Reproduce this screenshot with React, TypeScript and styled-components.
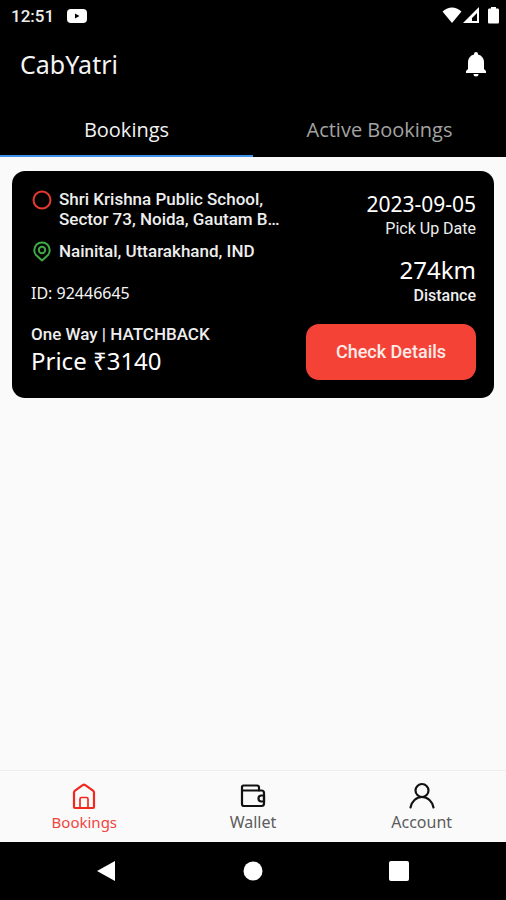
import React, { useState } from "react";
import styled, { createGlobalStyle } from "styled-components";

const SANS = '"Noto Sans", "Open Sans", sans-serif';
const ROBOTO = 'Roboto, "Noto Sans", sans-serif';

const GlobalStyle = createGlobalStyle`
  * { box-sizing: border-box; }
  body { margin: 0; background: #fafafa; }
  button { border: 0; padding: 0; background: none; cursor: pointer; }
  h1, p { margin: 0; font-weight: 400; }
  svg { display: block; flex: none; }
`;

const Screen = styled.div`
  min-height: 100vh;
  display: flex;
  flex-direction: column;
  background: #fafafa;
  color: #fff;
  font-family: ${SANS};
`;

const Header = styled.header`
  background: #000;
`;

const StatusBar = styled.div`
  height: 32px;
  padding: 0 7px 0 11px;
  display: flex;
  align-items: center;
  justify-content: space-between;
`;

const StatusGroup = styled.div<{ $gap: number }>`
  display: flex;
  align-items: center;
  gap: ${(p) => p.$gap}px;
`;

const Clock = styled.time`
  font: 500 17px/20px ${ROBOTO};
  color: #eee;
`;

const AppBar = styled.div`
  height: 68px;
  padding: 0 16px 4px 20px;
  display: flex;
  align-items: center;
  justify-content: space-between;
`;

const Title = styled.h1`
  font-size: 25px;
  line-height: 32px;
  color: #f5f5f5;
`;

const IconButton = styled.button`
  display: flex;
`;

const Tabs = styled.div`
  display: flex;
`;

const Tab = styled.button<{ $active: boolean }>`
  flex: 1;
  height: 57px;
  border-bottom: 2px solid ${(p) => (p.$active ? "#3f92ea" : "#000")};
  font: 400 20px/28px "Open Sans", sans-serif;
  padding-top: 4px;
  color: ${(p) => (p.$active ? "#f2f2f2" : "#a3a3a3")};
`;

const Content = styled.main`
  flex: 1;
  padding: 14px 12px;
`;

const Card = styled.article`
  background: #000;
  border-radius: 13px;
  padding: 18px 18px 18px 19px;
  display: flex;
  flex-direction: column;
  gap: 18px;
`;

const CardRow = styled.div`
  display: flex;
  justify-content: space-between;
  align-items: flex-start;
`;

const Places = styled.div`
  display: flex;
  flex-direction: column;
  gap: 12px;
`;

const Place = styled.div`
  display: flex;
  align-items: flex-start;
  gap: 6px;
`;

const Strong = styled.p`
  font: 500 17px/20px ${ROBOTO};
  color: #eee;
`;

const BookingId = styled.p`
  padding-top: 7px;
  font-size: 16px;
  line-height: 22px;
  color: #f5f5f5;
`;

const Stats = styled.div`
  display: flex;
  flex-direction: column;
  gap: 15px;
  text-align: right;
  flex: none;
`;

const StatValue = styled.p<{ $large?: boolean }>`
  font-size: ${(p) => (p.$large ? 24 : 21)}px;
  line-height: ${(p) => (p.$large ? 32 : 30)}px;
`;

const StatLabel = styled.p<{ $bold?: boolean }>`
  font: ${(p) => (p.$bold ? 500 : 400)} 16px/20px ${ROBOTO};
  color: #eee;
`;

const Price = styled.p`
  font-size: 24px;
  line-height: 34px;
`;

const DetailsButton = styled.button`
  width: 170px;
  height: 56px;
  border-radius: 13px;
  background: #f44336;
  color: #ffecea;
  font: 500 18px/24px ${ROBOTO};
`;

const BottomNav = styled.nav`
  height: 72px;
  display: flex;
  border-top: 1px solid #eee;
`;

const NavItem = styled.button<{ $active: boolean }>`
  flex: 1;
  display: flex;
  flex-direction: column;
  align-items: center;
  padding-top: 11px;
  color: ${(p) => (p.$active ? "#f0281e" : "#111")};
`;

const NavLabel = styled.span<{ $active: boolean }>`
  font: 400 ${(p) => (p.$active ? 15 : 16)}px/24px ${SANS};
  color: ${(p) => (p.$active ? "#f0453d" : "#5c5c5c")};
`;

const SystemBar = styled.div`
  height: 58px;
  background: #000;
  display: flex;
  justify-content: center;
  gap: 98px;
`;

const SystemButton = styled.button`
  width: 48px;
  display: flex;
  align-items: center;
  justify-content: center;
`;

const stroke = {
  fill: "none",
  stroke: "currentColor",
  strokeWidth: 2.2,
  strokeLinecap: "round" as const,
  strokeLinejoin: "round" as const,
};

const HomeIcon = () => (
  <svg width="28" height="28" viewBox="0 0 28 28" {...stroke}>
    <path d="M4 25V10.500Q4 9.500 5 8.700L12.700 3.100Q14 2.200 15.300 3.100L23 8.700Q24 9.500 24 10.500V25Q24 26 23 26H5Q4 26 4 25Z" />
    <path d="M10 25.500V17Q10 15.500 11.500 15.500H16.500Q18 15.500 18 17V25.500" strokeWidth="1.700" />
  </svg>
);

const WalletIcon = () => (
  <svg width="28" height="28" viewBox="0 0 28 28" {...stroke}>
    <path d="M3 8.500V5Q3 3.500 4.500 3.500H18Q20 3.500 20 5.500V8.500" />
    <path d="M3 8.500H22.500Q25 8.500 25 11V21.500Q25 24 22.500 24H5Q3 24 3 22V8.500" />
    <path d="M25 13.500H22.500A3 3 0 0 0 22.500 19.500H25V13.500Z" />
  </svg>
);

const AccountIcon = () => (
  <svg width="28" height="28" viewBox="0 0 28 28" {...stroke}>
    <circle cx="14" cy="8.500" r="6.500" />
    <path d="M2.500 25.500C3.600 19.500 8.200 15 14 15S24.400 19.500 25.500 25.500" />
  </svg>
);

const navItems = [
  { label: "Bookings", Icon: HomeIcon },
  { label: "Wallet", Icon: WalletIcon },
  { label: "Account", Icon: AccountIcon },
];

export default function App() {
  const [tab, setTab] = useState("Bookings");
  const [section, setSection] = useState("Bookings");

  return (
    <>
      <GlobalStyle />
      <Screen>
        <Header>
          <StatusBar>
            <StatusGroup $gap={13}>
              <Clock>12:51</Clock>
              <svg width="20" height="14" viewBox="0 0 20 14">
                <rect width="20" height="14" rx="4" fill="#fff" />
                <path d="M8 4.500V9.500L12.500 7Z" fill="#000" />
              </svg>
            </StatusGroup>
            <StatusGroup $gap={1}>
              <svg width="20" height="18" viewBox="0 0 20 18">
                <path d="M0.500 4.500Q10-3.500 19.500 4.500L10 16Z" fill="#fff" />
              </svg>
              <svg width="17" height="18" viewBox="0 0 17 18">
                <path fillRule="evenodd" d="M0 16L16 0V16ZM9 14H14V6L9 11Z" fill="#fff" />
              </svg>
              <svg width="18" height="18" viewBox="0 0 18 18">
                <path d="M8 1.500H10V0H15V1.500H17Q18 1.500 18 3V15Q18 16.500 17 16.500H8Q7 16.500 7 15V3Q7 1.500 8 1.500Z" fill="#fff" />
              </svg>
            </StatusGroup>
          </StatusBar>
          <AppBar>
            <Title>CabYatri</Title>
            <IconButton aria-label="Notifications">
              <svg width="28" height="28" viewBox="0 0 28 28" fill="#fff">
                <path d="M12 4Q12 2 14 2T16 4V4.500C20 5.500 22 8.500 22 12.500V19L24 21V23H4V21L6 19V12.500C6 8.500 8 5.500 12 4.500ZM11.500 24H16.500Q16.500 26.500 14 26.500T11.500 24Z" />
              </svg>
            </IconButton>
          </AppBar>
          <Tabs role="tablist">
            {["Bookings", "Active Bookings"].map((name) => (
              <Tab
                key={name}
                role="tab"
                aria-selected={tab === name}
                $active={tab === name}
                onClick={() => setTab(name)}
              >
                {name}
              </Tab>
            ))}
          </Tabs>
        </Header>

        <Content>
          <Card>
            <CardRow>
              <Places>
                <Place>
                  <svg width="22" height="22" viewBox="0 0 22 22">
                    <circle cx="11" cy="11" r="8.500" fill="none" stroke="#e53b2f" strokeWidth="2" />
                  </svg>
                  <Strong>
                    Shri Krishna Public School,
                    <br />
                    Sector 73, Noida, Gautam B…
                  </Strong>
                </Place>
                <Place>
                  <svg width="22" height="22" viewBox="0 0 22 22" fill="none" stroke="#3fa845" strokeWidth="2" strokeLinejoin="round">
                    <path d="M11 19.500L5.300 14.300A7.700 7.700 0 1 1 16.700 14.300Z" />
                    <circle cx="11" cy="9" r="3.200" />
                  </svg>
                  <Strong>Nainital, Uttarakhand, IND</Strong>
                </Place>
                <BookingId>ID: 92446645</BookingId>
              </Places>
              <Stats>
                <div>
                  <StatValue>2023-09-05</StatValue>
                  <StatLabel>Pick Up Date</StatLabel>
                </div>
                <div>
                  <StatValue $large>274km</StatValue>
                  <StatLabel $bold>Distance</StatLabel>
                </div>
              </Stats>
            </CardRow>
            <CardRow>
              <div>
                <Strong>One Way | HATCHBACK</Strong>
                <Price>Price ₹3140</Price>
              </div>
              <DetailsButton>Check Details</DetailsButton>
            </CardRow>
          </Card>
        </Content>

        <BottomNav>
          {navItems.map(({ label, Icon }) => (
            <NavItem key={label} $active={section === label} onClick={() => setSection(label)}>
              <Icon />
              <NavLabel $active={section === label}>{label}</NavLabel>
            </NavItem>
          ))}
        </BottomNav>

        <SystemBar>
          <SystemButton aria-label="Back">
            <svg width="20" height="22" viewBox="0 0 20 22">
              <path d="M0 11L18 1V21Z" fill="#fff" />
            </svg>
          </SystemButton>
          <SystemButton aria-label="Home">
            <svg width="20" height="20" viewBox="0 0 20 20">
              <circle cx="10" cy="10" r="9.500" fill="#fff" />
            </svg>
          </SystemButton>
          <SystemButton aria-label="Recent apps">
            <svg width="20" height="20" viewBox="0 0 20 20">
              <rect width="20" height="20" rx="2" fill="#fff" />
            </svg>
          </SystemButton>
        </SystemBar>
      </Screen>
    </>
  );
}
